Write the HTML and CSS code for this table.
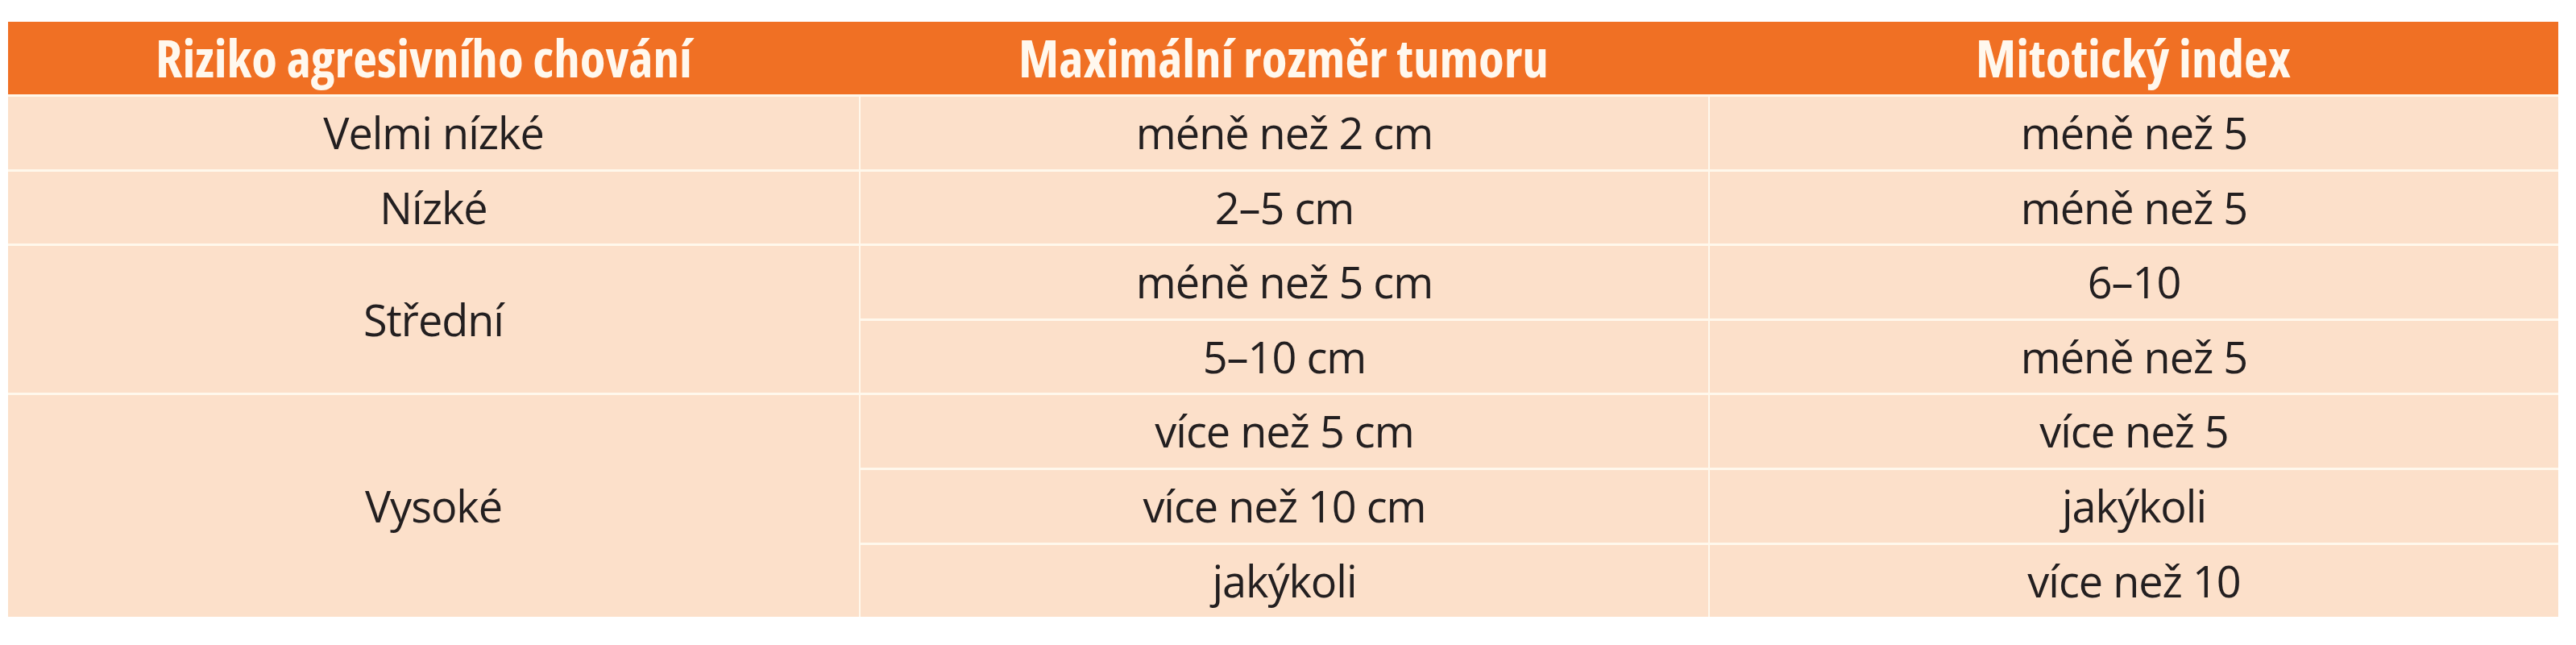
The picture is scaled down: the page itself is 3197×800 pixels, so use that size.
FILE: index.html
```html
<!DOCTYPE html>
<html lang="cs">
<head>
<meta charset="utf-8">
<title>Riziko agresivního chování</title>
<link rel="stylesheet" href="styles.css">
</head>
<body>
<div class="wrap">
<table class="risk">
<colgroup>
<col class="c1"><col class="c2"><col class="c3">
</colgroup>
<thead>
<tr>
<th class="first">Riziko agresivního chování</th>
<th>Maximální rozměr tumoru</th>
<th>Mitotický index</th>
</tr>
</thead>
<tbody>
<tr>
<td>Velmi nízké</td>
<td class="sep">méně než 2 cm</td>
<td class="sep">méně než 5</td>
</tr>
<tr>
<td>Nízké</td>
<td class="sep">2–5 cm</td>
<td class="sep">méně než 5</td>
</tr>
<tr>
<td rowspan="2">Střední</td>
<td class="sep">méně než 5 cm</td>
<td class="sep">6–10</td>
</tr>
<tr>
<td class="sep">5–10 cm</td>
<td class="sep">méně než 5</td>
</tr>
<tr>
<td rowspan="3">Vysoké</td>
<td class="sep">více než 5 cm</td>
<td class="sep">více než 5</td>
</tr>
<tr>
<td class="sep">více než 10 cm</td>
<td class="sep">jakýkoli</td>
</tr>
<tr>
<td class="sep">jakýkoli</td>
<td class="sep">více než 10</td>
</tr>
</tbody>
</table>
</div>
</body>
</html>
```
FILE: styles.css
```css
html, body {
  margin: 0;
  padding: 0;
  background: #ffffff;
}

.wrap {
  padding: 27px 0 0 10px;
}

.risk {
  width: 3165px;
  table-layout: fixed;
  border-collapse: separate;
  border-spacing: 0;
  font-family: "Open Sans", "Noto Sans", sans-serif;
}

.c1 { width: 1056px; }
.c2 { width: 1054px; }
.c3 { width: 1055px; }

.risk th {
  height: 90px;
  padding: 0;
  background: #f07024;
  color: #fff8ee;
  font-size: 65px;
  font-weight: 700;
  font-stretch: 87.5%;
  line-height: 1.1;
  text-align: center;
  vertical-align: middle;
}

.risk th.first {
  padding-right: 24px;
}

.risk td {
  height: 89.6px;
  padding: 0;
  background: #fce0ca;
  color: #231f20;
  font-size: 54px;
  font-weight: 400;
  letter-spacing: -1px;
  line-height: 1.1;
  text-align: center;
  vertical-align: middle;
  border-top: 3px solid #fff8ec;
}

.risk td.sep {
  border-left: 2px solid #fff8ec;
}
```
